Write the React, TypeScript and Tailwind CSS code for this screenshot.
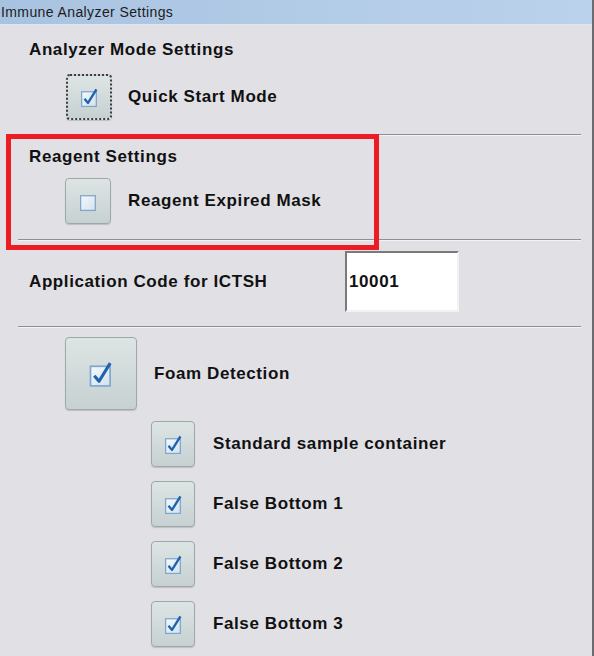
import React from 'react'

function CheckIcon({ checked, size }: { checked: boolean; size: number }) {
  return (
    <svg width={size} height={size} viewBox="0 0 20 20">
      <defs>
        <linearGradient id="cbfill" x1="0" y1="0" x2="1" y2="1">
          <stop offset="0" stopColor="#f4f8fb" />
          <stop offset="1" stopColor="#d3e2ee" />
        </linearGradient>
      </defs>
      <rect x="2.5" y="4.5" width="14" height="14" fill="url(#cbfill)" stroke="#7fa6cc" strokeWidth="1.2" />
      {checked && (
        <path d="M5.2 11.2 L8.6 15.2 L16.6 2.2" fill="none" stroke="#1f62ad" strokeWidth="2.2" strokeLinejoin="round" />
      )}
    </svg>
  )
}

function CheckButton({
  checked,
  focused,
  className,
  iconSize,
}: {
  checked: boolean
  focused?: boolean
  className: string
  iconSize: number
}) {
  return (
    <div
      className={`flex shrink-0 items-center justify-center rounded-[4px] bg-gradient-to-b from-[#dde4e4] to-[#c7d1d2] shadow-[0_1px_1px_rgba(0,0,0,0.15)] ${
        focused ? 'border-2 border-dotted border-[#3c3c3c]' : 'border border-[#9ea7a9]'
      } ${className}`}
    >
      <CheckIcon checked={checked} size={iconSize} />
    </div>
  )
}

function Separator({ className }: { className: string }) {
  return (
    <div className={`ml-[18px] w-[563px] ${className}`}>
      <div className="h-px bg-[#8e8e94]" />
      <div className="h-px bg-[#f3f3f6]" />
    </div>
  )
}

const label = 'text-[17px] font-bold leading-[20px] tracking-[0.6px]'

const subItems = ['Standard sample container', 'False Bottom 1', 'False Bottom 2', 'False Bottom 3']

export default function App() {
  return (
    <div className="relative h-[656px] w-[594px] overflow-hidden border-r-2 border-[#6c6c70] bg-[#e0e0e5] font-['Liberation_Sans',Arial,sans-serif] text-[#111]">
      <div className="h-[25px] border-b border-[#dce6f1] bg-gradient-to-r from-[#a8c3e1] to-[#bbd2ec] pl-[1px] text-[14px] leading-[24px] tracking-[0.4px] text-[#1c1c1c]">
        Immune Analyzer Settings
      </div>

      <div className={`ml-[29px] mt-[15px] ${label}`}>Analyzer Mode Settings</div>
      <div className="ml-[66px] mt-[14px] flex items-center gap-[16px]">
        <CheckButton checked focused className="h-[46px] w-[46px]" iconSize={21} />
        <span className={label}>Quick Start Mode</span>
      </div>
      <Separator className="mt-[14px]" />

      <div className={`ml-[29px] mt-[11px] ${label}`}>Reagent Settings</div>
      <div className="ml-[65px] mt-[11px] flex items-center gap-[17px]">
        <CheckButton checked={false} className="h-[46px] w-[46px]" iconSize={21} />
        <span className={label}>Reagent Expired Mask</span>
      </div>
      <Separator className="mt-[15px]" />

      <div className="ml-[29px] mt-[10px] flex items-center">
        <span className={`w-[316px] ${label}`}>Application Code for ICTSH</span>
        <div className={`flex h-[61px] w-[114px] items-center border-2 border-b-[#f2f2f2] border-l-[#7a7a7a] border-r-[#f2f2f2] border-t-[#7a7a7a] bg-white pl-[2px] ${label}`}>
          10001
        </div>
      </div>
      <Separator className="mt-[14px]" />

      <div className="ml-[65px] mt-[9px] flex items-center gap-[17px]">
        <CheckButton checked className="h-[73px] w-[72px]" iconSize={28} />
        <span className={label}>Foam Detection</span>
      </div>
      <div className="ml-[151px] mt-[11px] flex flex-col gap-[14px]">
        {subItems.map((item) => (
          <div key={item} className="flex items-center gap-[18px]">
            <CheckButton checked className="h-[46px] w-[44px]" iconSize={21} />
            <span className={label}>{item}</span>
          </div>
        ))}
      </div>

      <div className="pointer-events-none absolute left-[6px] top-[134px] h-[116px] w-[373px] border-[5px] border-[#ed1c24]" />
    </div>
  )
}
